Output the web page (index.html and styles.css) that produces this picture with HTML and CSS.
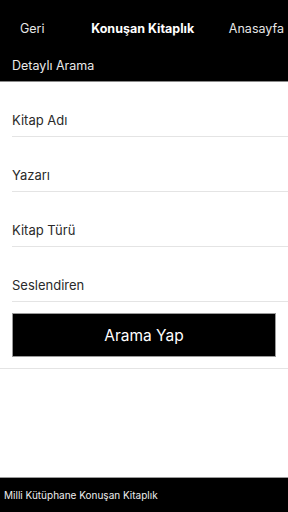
FILE: index.html
```html
<!DOCTYPE html>
<html lang="tr">
<head>
<meta charset="utf-8">
<link rel="stylesheet" href="styles.css">
</head>
<body>
<div class="page">
  <header class="header">
    <nav class="nav">
      <span class="nav-link nav-back">Geri</span>
      <span class="nav-title">Konuşan Kitaplık</span>
      <span class="nav-link nav-home">Anasayfa</span>
    </nav>
    <div class="subtitle">Detaylı Arama</div>
  </header>
  <main class="form">
    <div class="field"><span class="label">Kitap Adı</span></div>
    <div class="field"><span class="label">Yazarı</span></div>
    <div class="field"><span class="label">Kitap Türü</span></div>
    <div class="field"><span class="label">Seslendiren</span></div>
    <div class="action"><button class="btn">Arama Yap</button></div>
  </main>
  <footer class="footer">Milli Kütüphane Konuşan Kitaplık</footer>
</div>
</body>
</html>
```
FILE: styles.css
```css
* { box-sizing: border-box; }
html, body { margin: 0; padding: 0; }
body {
  font-family: Inter, "Noto Sans", "Liberation Sans", sans-serif;
  background: #fff;
  width: 288px;
  height: 512px;
}
.page {
  display: flex;
  flex-direction: column;
  height: 512px;
}
.header {
  background: #000;
  color: #fff;
  height: 82px;
  border-bottom: 1px solid #8a8a8a;
  display: flex;
  flex-direction: column;
}
.nav {
  height: 50px;
  display: flex;
  align-items: center;
  justify-content: space-between;
  padding: 6px 4px 0 20px;
}
.nav-link {
  font-size: 12.5px;
  color: #e6e6e6;
}
.nav-title {
  font-size: 12.5px;
  font-weight: 700;
  color: #fff;
  margin-left: 12px;
}
.subtitle {
  font-size: 12.5px;
  color: #eaeaea;
  padding: 0 12px;
  line-height: 18px;
  margin-top: 7px;
}
.form {
  flex: 1;
  display: flex;
  flex-direction: column;
}
.field {
  margin-left: 12px;
  height: 55px;
  border-bottom: 1px solid #e4e4e4;
  display: flex;
  align-items: flex-end;
  padding-bottom: 6px;
}
.label {
  font-size: 13px;
  color: #2a2a2a;
  line-height: 20px;
}
.action {
  padding: 11px 0 11px 0;
  border-bottom: 1px solid #e4e4e4;
  display: flex;
  justify-content: center;
}
.btn {
  width: 264px;
  height: 44px;
  background: #000;
  color: #fff;
  border: 1px solid #9a9a9a;
  font-family: inherit;
  font-size: 15.5px;
}
.footer {
  margin-top: auto;
  height: 35px;
  background: #000;
  color: #eee;
  border-top: 1px solid #9a9a9a;
  font-size: 10px;
  display: flex;
  align-items: center;
  padding: 0 4px;
}
```
